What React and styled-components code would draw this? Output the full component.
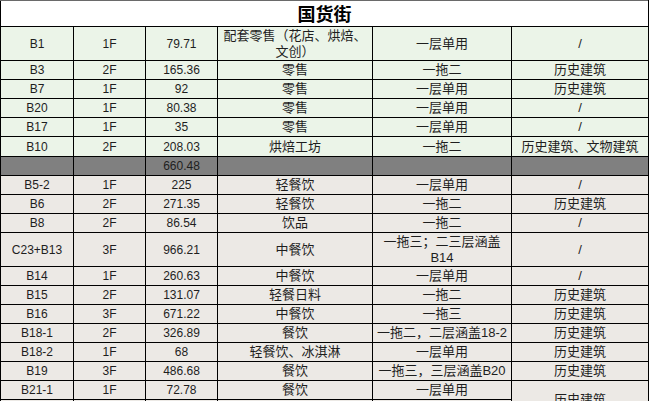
import styled, { createGlobalStyle } from 'styled-components'

const GlobalStyle = createGlobalStyle`
  html, body {
    margin: 0;
    padding: 0;
    background: #ffffff;
  }
  body {
    font-family: "Liberation Sans", "Noto Sans CJK SC", sans-serif;
    overflow: hidden;
  }
`

const bgColors = {
  green: '#ebf4e8',
  gray: '#808080',
  beige: '#ece9e5',
}

const colWidths = [73, 72, 72, 155, 139, 137]

const retail = [
  { id: 'B1', floor: '1F', area: '79.71', use: '配套零售（花店、烘焙、文创）', mode: '一层单用', note: '/', tall: true },
  { id: 'B3', floor: '2F', area: '165.36', use: '零售', mode: '一拖二', note: '历史建筑' },
  { id: 'B7', floor: '1F', area: '92', use: '零售', mode: '一层单用', note: '历史建筑' },
  { id: 'B20', floor: '1F', area: '80.38', use: '零售', mode: '一层单用', note: '/' },
  { id: 'B17', floor: '1F', area: '35', use: '零售', mode: '一层单用', note: '/' },
  { id: 'B10', floor: '2F', area: '208.03', use: '烘焙工坊', mode: '一拖二', note: '历史建筑、文物建筑', extra: true },
]

const dining = [
  { id: 'B5-2', floor: '1F', area: '225', use: '轻餐饮', mode: '一层单用', note: '/' },
  { id: 'B6', floor: '2F', area: '271.35', use: '轻餐饮', mode: '一拖二', note: '历史建筑' },
  { id: 'B8', floor: '2F', area: '86.54', use: '饮品', mode: '一拖二', note: '/' },
  { id: 'C23+B13', floor: '3F', area: '966.21', use: '中餐饮', mode: '一拖三；二三层涵盖B14', note: '/', tall: true },
  { id: 'B14', floor: '1F', area: '260.63', use: '中餐饮', mode: '一层单用', note: '/' },
  { id: 'B15', floor: '2F', area: '131.07', use: '轻餐日料', mode: '一拖二', note: '历史建筑' },
  { id: 'B16', floor: '3F', area: '671.22', use: '中餐饮', mode: '一拖三', note: '历史建筑' },
  { id: 'B18-1', floor: '2F', area: '326.89', use: '餐饮', mode: '一拖二，二层涵盖18-2', note: '历史建筑' },
  { id: 'B18-2', floor: '1F', area: '68', use: '轻餐饮、冰淇淋', mode: '一层单用', note: '历史建筑' },
  { id: 'B19', floor: '3F', area: '486.68', use: '餐饮', mode: '一拖三，三层涵盖B20', note: '历史建筑' },
  { id: 'B21-1', floor: '1F', area: '72.78', use: '餐饮', mode: '一层单用', note: '历史建筑', span: 2 },
]

const Sheet = styled.table`
  border-collapse: collapse;
  table-layout: fixed;
  width: 649px;
  color: #1e1e1e;
  border-top: 1px solid #6a6a6a;
`

const TitleCell = styled.th`
  height: 26px;
  padding: 2px 0 0;
  box-sizing: border-box;
  background: #ffffff;
  border: 1px solid #000;
  border-top-color: #6a6a6a;
  font-size: 18px;
  font-weight: 700;
  line-height: 22px;
  color: #000;
  text-align: center;
  vertical-align: middle;
`

const Row = styled.tr`
  background: ${({ $tone }) => bgColors[$tone]};
`

const Cell = styled.td`
  height: ${({ $h }) => $h}px;
  padding: 0 2px;
  box-sizing: border-box;
  border: 1px solid #000;
  text-align: center;
  vertical-align: middle;
  font-size: ${({ $num }) => ($num ? 12 : 13)}px;
  line-height: 16px;
  white-space: ${({ $wrap }) => ($wrap ? 'normal' : 'nowrap')};
  overflow: hidden;
`

const rowHeight = (r) => (r.tall ? 34 : r.extra ? 20 : 19)

const DataRow = ({ r, tone }) => {
  const h = rowHeight(r)
  return (
    <Row $tone={tone}>
      <Cell $h={h} $num>{r.id}</Cell>
      <Cell $h={h} $num>{r.floor}</Cell>
      <Cell $h={h} $num>{r.area}</Cell>
      <Cell $h={h} $wrap>{r.use}</Cell>
      <Cell $h={h} $wrap>{r.mode}</Cell>
      {r.note !== null && (
        <Cell $h={h} rowSpan={r.span || 1}>{r.note}</Cell>
      )}
    </Row>
  )
}

export default function App() {
  return (
    <>
      <GlobalStyle />
      <Sheet>
        <colgroup>
          {colWidths.map((w, i) => (
            <col key={i} style={{ width: w }} />
          ))}
        </colgroup>
        <thead>
          <tr>
            <TitleCell colSpan={6}>国货街</TitleCell>
          </tr>
        </thead>
        <tbody>
          {retail.map((r) => (
            <DataRow key={r.id} r={r} tone="green" />
          ))}
          <Row $tone="gray">
            <Cell $h={19} />
            <Cell $h={19} />
            <Cell $h={19} $num>660.48</Cell>
            <Cell $h={19} />
            <Cell $h={19} />
            <Cell $h={19} />
          </Row>
          {dining.map((r) => (
            <DataRow key={r.id} r={r} tone="beige" />
          ))}
          <Row $tone="beige">
            <Cell $h={19} />
            <Cell $h={19} />
            <Cell $h={19} />
            <Cell $h={19} />
            <Cell $h={19} />
          </Row>
        </tbody>
      </Sheet>
    </>
  )
}
